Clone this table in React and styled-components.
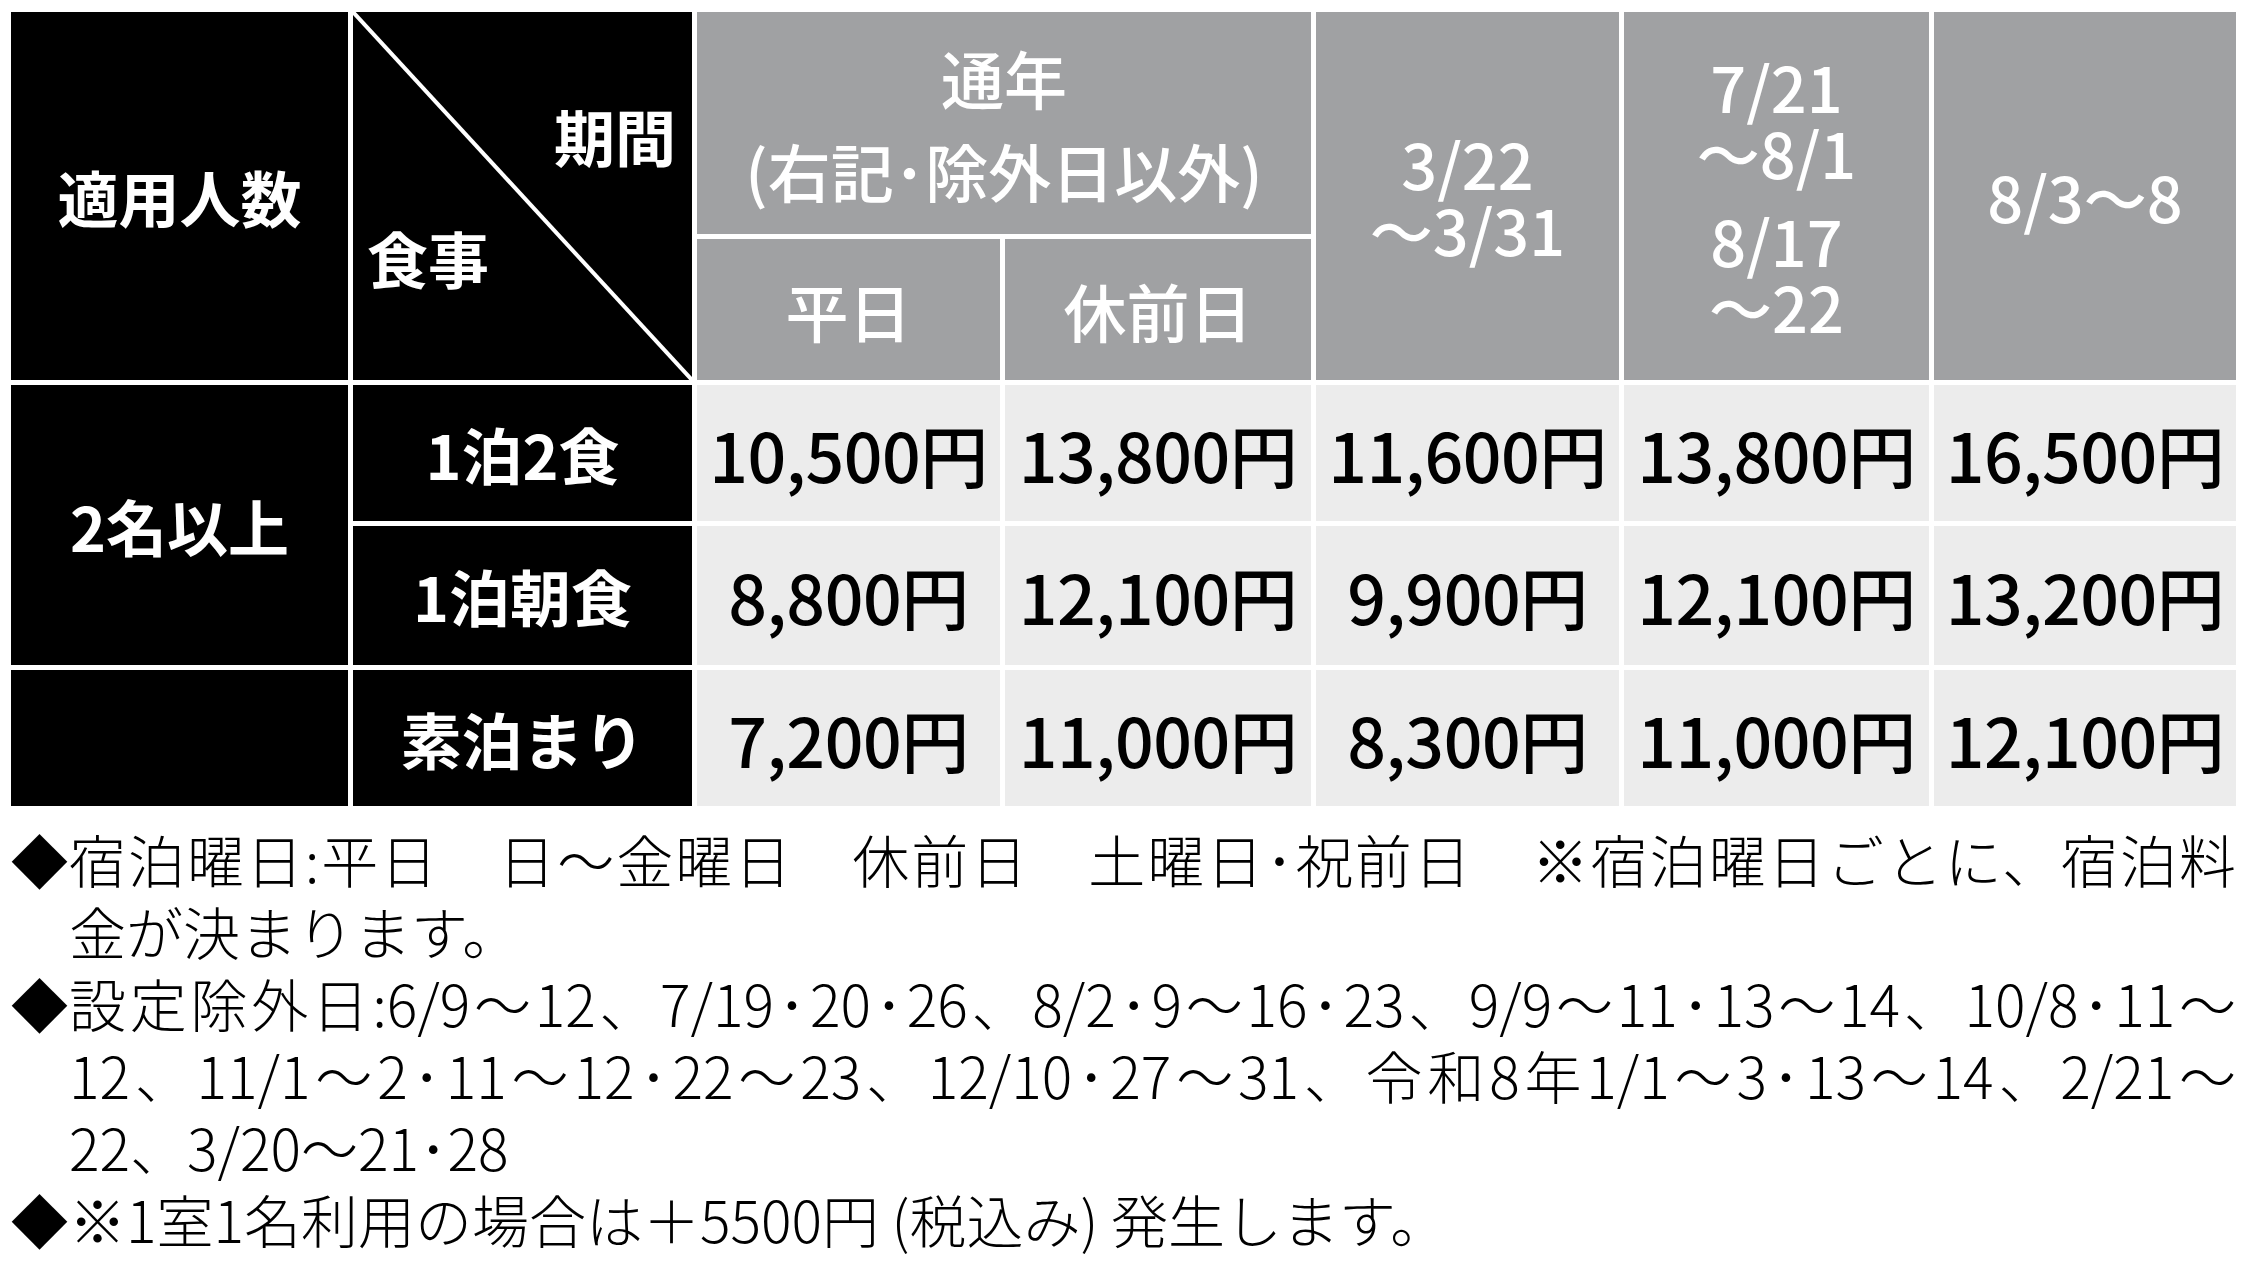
import React from 'react';
import styled, {createGlobalStyle} from 'styled-components';

const GlobalStyle = createGlobalStyle`
  html, body {
    margin:           0;
    padding:          0;
    background-color: #fff;
  }
  body {
    font-family:      "Noto Sans CJK JP", "Noto Sans", sans-serif;
  }
`;

const Page = styled.main`
  padding:          12px 14px 0 11px;
`;

const Table = styled.div`
  display:               grid;
  grid-template-columns: 337px 339px 303px 306px 303px 305px 302px;
  grid-template-rows:    222px 141px 136px 139px 136px;
  gap:                   5px;
`;

const Cell = styled.div`
  display:          flex;
  flex-direction:   column;
  align-items:      center;
  justify-content:  center;
  grid-row:         span ${p => p.$rows || 1};
  grid-column:      span ${p => p.$cols || 1};
  white-space:      nowrap;
`;

const DarkCell = styled(Cell)`
  background-color: #000;
  color:            #fff;
  font-size:        61px;
  font-weight:      700;
  line-height:      1;
`;

const HeadCell = styled(Cell)`
  background-color: #a0a1a3;
  color:            #fff;
  font-size:        63px;
  font-weight:      500;
  line-height:      66px;
`;

const HeadGroup = styled.div`
  display:          flex;
  flex-direction:   column;
  align-items:      center;
  & + & {
    margin-top:     22px;
  }
`;

const YearLine = styled.div`
  line-height:      93px;
`;

const PriceCell = styled(Cell)`
  background-color: #ececec;
  color:            #000;
  font-size:        68px;
  font-weight:      500;
  letter-spacing:   -0.5px;
`;

const CornerCell = styled.div`
  position:         relative;
  grid-row:         span 2;
  background-color: #000;
  color:            #fff;
  font-size:        61px;
  font-weight:      700;
  line-height:      64px;
  display:          flex;
  flex-direction:   column;
  padding:          92px 16px 0 14px;
`;

const CornerTop = styled.div`
  align-self:       flex-end;
`;

const CornerBottom = styled.div`
  align-self:       flex-start;
  margin-top:       58px;
`;

const Slash = styled.svg`
  position:         absolute;
  inset:            0;
  width:            100%;
  height:           100%;
`;

const Notes = styled.section`
  margin-top:       16px;
  font-size:        57px;
  font-weight:      300;
  line-height:      72px;
  color:            #000;
`;

const Note = styled.div`
  display:          flex;
`;

const Marker = styled.span`
  flex:             0 0 58px;
  font-weight:      400;
`;

const NoteBody = styled.div`
  flex:             1;
  display:          flex;
  flex-direction:   column;
`;

const NoteLine = styled.span`
  white-space:      pre;
  text-align:       justify;
  text-align-last:  ${p => (p.$fill ? 'justify' : 'left')};
`;

const rows = [
  {meal: '1泊2食',  prices: ['10,500円', '13,800円', '11,600円', '13,800円', '16,500円']},
  {meal: '1泊朝食', prices: ['8,800円',  '12,100円', '9,900円',  '12,100円', '13,200円']},
  {meal: '素泊まり', prices: ['7,200円',  '11,000円', '8,300円',  '11,000円', '12,100円']},
];

// each note: lines of text; every line but the last fills the width (justified print text)
const notes = [
  ['宿泊曜日:平日　日～金曜日　休前日　土曜日･祝前日　※宿泊曜日ごとに、宿泊料', '金が決まります。'],
  ['設定除外日:6/9～12、7/19･20･26、8/2･9～16･23、9/9～11･13～14、10/8･11～',
   '12、11/1～2･11～12･22～23、12/10･27～31、令和8年1/1～3･13～14、2/21～',
   '22、3/20～21･28'],
  ['※1室1名利用の場合は＋5500円 (税込み) 発生します。'],
];

const PriceRow = ({meal, prices}) => (
  <>
    <DarkCell>{meal}</DarkCell>
    {prices.map((p, i) => <PriceCell key={i}>{p}</PriceCell>)}
  </>
);

export default function App() {
  return (
    <Page lang="ja">
      <GlobalStyle/>
      <Table>
        <DarkCell $rows={2}>適用人数</DarkCell>
        <CornerCell>
          <Slash viewBox="0 0 100 100" preserveAspectRatio="none">
            <line x1="0" y1="0" x2="100" y2="100" stroke="#fff" strokeWidth="4" vectorEffect="non-scaling-stroke"/>
          </Slash>
          <CornerTop>期間</CornerTop>
          <CornerBottom>食事</CornerBottom>
        </CornerCell>
        <HeadCell $cols={2}>
          <YearLine>通年</YearLine>
          <YearLine>(右記･除外日以外)</YearLine>
        </HeadCell>
        <HeadCell $rows={2}>
          <HeadGroup><span>3/22</span><span>～3/31</span></HeadGroup>
        </HeadCell>
        <HeadCell $rows={2}>
          <HeadGroup><span>7/21</span><span>～8/1</span></HeadGroup>
          <HeadGroup><span>8/17</span><span>～22</span></HeadGroup>
        </HeadCell>
        <HeadCell $rows={2}>8/3～8</HeadCell>
        <HeadCell>平日</HeadCell>
        <HeadCell>休前日</HeadCell>

        <DarkCell $rows={2}>2名以上</DarkCell>
        <PriceRow {...rows[0]}/>
        <PriceRow {...rows[1]}/>
        <DarkCell/>
        <PriceRow {...rows[2]}/>
      </Table>

      <Notes>
        {notes.map((lines, i) => (
          <Note key={i}>
            <Marker>◆</Marker>
            <NoteBody>
              {lines.map((l, j) => (
                <NoteLine key={j} $fill={j < lines.length - 1}>{l}</NoteLine>
              ))}
            </NoteBody>
          </Note>
        ))}
      </Notes>
    </Page>
  );
}
